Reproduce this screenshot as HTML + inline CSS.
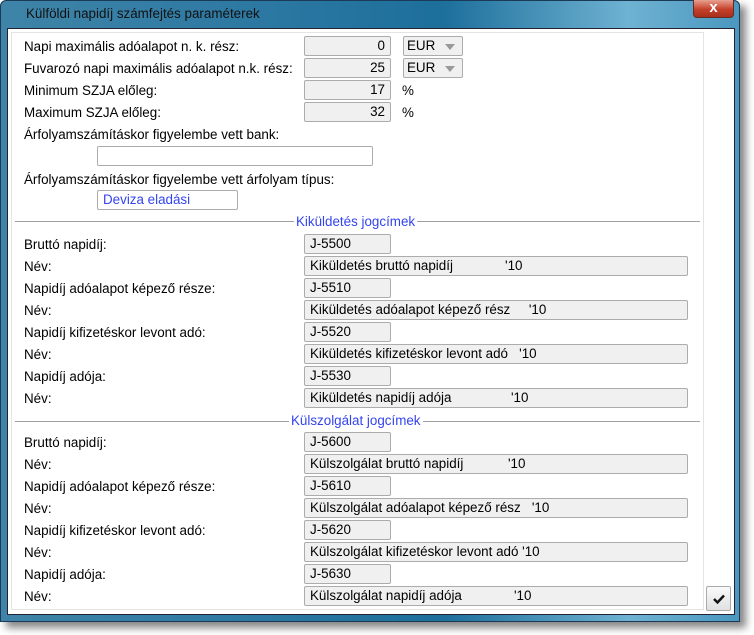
<!DOCTYPE html>
<html><head><meta charset="utf-8"><style>
*{box-sizing:border-box;margin:0;padding:0}
body{width:754px;height:635px;background:#fff;position:relative;overflow:hidden;font-family:"Liberation Sans",sans-serif;font-size:13.4px;color:#000}
.shadow{position:absolute;left:6px;top:6px;width:740px;height:622px;background:#555;filter:blur(4px);opacity:.7}
.frame{position:absolute;left:0;top:0;width:740px;height:622px;border:1px solid #1a3a55;border-radius:6px 6px 0 0;background:linear-gradient(90deg,#3f84a8 0%,#2f7aa3 30%,#1d6f9c 60%,#6fb2d2 85%,#4a97bf 100%)}
.title{position:absolute;left:26px;top:6px;font-size:13.4px;color:#111}
.close{position:absolute;left:693px;top:0;width:41px;height:18px;border:1px solid #6a2a20;border-top:none;border-radius:0 0 4px 4px;background:linear-gradient(#e8a090,#c5402a 55%,#a8301c);color:#fff;font-weight:bold;font-size:15px;text-align:center;line-height:15px}
.client{position:absolute;left:7px;top:28px;width:728px;height:587px;background:#fff;border:1px solid #223}
.panel{position:absolute;left:11px;top:32px;width:693px;height:578px;border:1px solid #e4e4e4;background:#fff}
.l{position:absolute;left:24px;line-height:16px;white-space:nowrap}
.f{position:absolute;height:20px;border:1px solid #acacac;border-radius:2px;background:#f0f0f0;padding:0 5px;line-height:18px;white-space:nowrap}
.r{text-align:right}
.dd{position:absolute;left:403px;width:60px;height:20px;border:1px solid #acacac;border-radius:2px;background:#f0f0f0;padding-left:3px;line-height:18px}
.dd:after{content:"";position:absolute;right:7px;top:7px;border-left:5px solid transparent;border-right:5px solid transparent;border-top:6px solid #999}
.sep{position:absolute;left:15px;width:685px;height:1px;background:#a0a0a0}
.sh{position:absolute;background:#fff;color:#3344ee;padding:0 2px;line-height:16px}
.ok{position:absolute;left:706px;top:586px;width:25px;height:25px;border:1px solid #aaa;border-radius:2px;background:linear-gradient(#fafafa,#e0e0e0)}
.ok svg{position:absolute;left:6px;top:7px}
</style></head><body>
<div class="shadow"></div>
<div class="frame"></div>
<div class="title">Külföldi napidíj számfejtés paraméterek</div>
<div class="close">x</div>
<div class="client"></div>
<div class="panel"></div>

<div class="l" style="top:39px">Napi maximális adóalapot n. k. rész:</div>
<div class="f r" style="left:304px;top:36px;width:87px">0</div>
<div class="dd" style="top:36px">EUR</div>
<div class="l" style="top:61px">Fuvarozó napi maximális adóalapot n.k. rész:</div>
<div class="f r" style="left:304px;top:58px;width:87px">25</div>
<div class="dd" style="top:58px">EUR</div>
<div class="l" style="top:83px">Minimum SZJA előleg:</div>
<div class="f r" style="left:304px;top:80px;width:87px">17</div>
<div class="l" style="left:402px;top:83px">%</div>
<div class="l" style="top:105px">Maximum SZJA előleg:</div>
<div class="f r" style="left:304px;top:102px;width:87px">32</div>
<div class="l" style="left:402px;top:105px">%</div>
<div class="l" style="top:127px">Árfolyamszámításkor figyelembe vett bank:</div>
<div class="f" style="left:97px;top:146px;width:276px;background:#fff"></div>
<div class="l" style="top:172px">Árfolyamszámításkor figyelembe vett árfolyam típus:</div>
<div class="f" style="left:97px;top:190px;width:141px;background:#fff;color:#3344ee">Deviza eladási</div>

<div class="sep" style="top:221px"></div>
<div class="sh" style="left:294px;top:214px">Kiküldetés jogcímek</div>
<div class="l" style="top:237px">Bruttó napidíj:</div>
<div class="f" style="left:304px;top:234px;width:87px">J-5500</div>
<div class="l" style="top:259px">Név:</div>
<div class="f" style="left:304px;top:256px;width:384px">Kiküldetés bruttó napidíj&nbsp;&nbsp;&nbsp;&nbsp;&nbsp;&nbsp;&nbsp;&nbsp;&nbsp;&nbsp;&nbsp;&nbsp;&nbsp;&nbsp;'10</div>
<div class="l" style="top:281px">Napidíj adóalapot képező része:</div>
<div class="f" style="left:304px;top:278px;width:87px">J-5510</div>
<div class="l" style="top:303px">Név:</div>
<div class="f" style="left:304px;top:300px;width:384px">Kiküldetés adóalapot képező rész&nbsp;&nbsp;&nbsp;&nbsp;&nbsp;'10</div>
<div class="l" style="top:325px">Napidíj kifizetéskor levont adó:</div>
<div class="f" style="left:304px;top:322px;width:87px">J-5520</div>
<div class="l" style="top:347px">Név:</div>
<div class="f" style="left:304px;top:344px;width:384px">Kiküldetés kifizetéskor levont adó&nbsp;&nbsp;&nbsp;'10</div>
<div class="l" style="top:369px">Napidíj adója:</div>
<div class="f" style="left:304px;top:366px;width:87px">J-5530</div>
<div class="l" style="top:391px">Név:</div>
<div class="f" style="left:304px;top:388px;width:384px">Kiküldetés napidíj adója&nbsp;&nbsp;&nbsp;&nbsp;&nbsp;&nbsp;&nbsp;&nbsp;&nbsp;&nbsp;&nbsp;&nbsp;&nbsp;&nbsp;&nbsp;&nbsp;'10</div>

<div class="sep" style="top:421px"></div>
<div class="sh" style="left:289px;top:413px">Külszolgálat jogcímek</div>
<div class="l" style="top:435px">Bruttó napidíj:</div>
<div class="f" style="left:304px;top:432px;width:87px">J-5600</div>
<div class="l" style="top:457px">Név:</div>
<div class="f" style="left:304px;top:454px;width:384px">Külszolgálat bruttó napidíj&nbsp;&nbsp;&nbsp;&nbsp;&nbsp;&nbsp;&nbsp;&nbsp;&nbsp;&nbsp;&nbsp;&nbsp;'10</div>
<div class="l" style="top:479px">Napidíj adóalapot képező része:</div>
<div class="f" style="left:304px;top:476px;width:87px">J-5610</div>
<div class="l" style="top:501px">Név:</div>
<div class="f" style="left:304px;top:498px;width:384px">Külszolgálat adóalapot képező rész&nbsp;&nbsp;&nbsp;'10</div>
<div class="l" style="top:523px">Napidíj kifizetéskor levont adó:</div>
<div class="f" style="left:304px;top:520px;width:87px">J-5620</div>
<div class="l" style="top:545px">Név:</div>
<div class="f" style="left:304px;top:542px;width:384px">Külszolgálat kifizetéskor levont adó '10</div>
<div class="l" style="top:567px">Napidíj adója:</div>
<div class="f" style="left:304px;top:564px;width:87px">J-5630</div>
<div class="l" style="top:589px">Név:</div>
<div class="f" style="left:304px;top:586px;width:384px">Külszolgálat napidíj adója&nbsp;&nbsp;&nbsp;&nbsp;&nbsp;&nbsp;&nbsp;&nbsp;&nbsp;&nbsp;&nbsp;&nbsp;&nbsp;&nbsp;'10</div>

<div class="ok"><svg width="12" height="10" viewBox="0 0 12 10"><path d="M1 5 L4.5 8.5 L11 1.5" fill="none" stroke="#111" stroke-width="2.4"/></svg></div>
</body></html>
